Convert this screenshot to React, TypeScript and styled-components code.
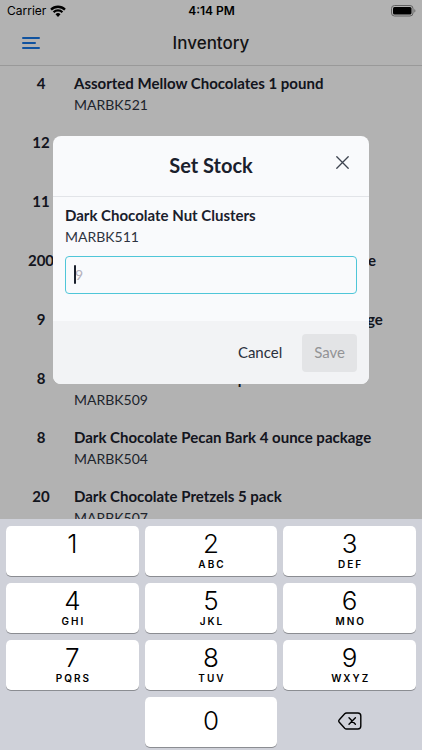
import React from "react";
import styled, { createGlobalStyle } from "styled-components";

const GlobalStyle = createGlobalStyle`
  *, *::before, *::after { box-sizing: border-box; }
  body { margin: 0; background: #fff; color: #1a202c; font-family: Lato, "Open Sans", sans-serif; }
  button, input { font: inherit; color: inherit; }
  button { border: 0; padding: 0; background: none; cursor: pointer; }
  h1, h2, h3, p, ul { margin: 0; padding: 0; }
`;

const Screen = styled.div`
  display: flex;
  flex-direction: column;
  height: 100vh;
  overflow: hidden;
`;

const Stage = styled.div`
  position: relative;
  flex: 1;
  min-height: 0;
  overflow: hidden;
`;

const StatusBar = styled.div`
  display: grid;
  grid-template-columns: 1fr auto 1fr;
  align-items: center;
  height: 22px;
  padding: 0 6px 0 7px;
  color: #000;
  font: 400 12px/22px Inter, sans-serif;
`;

const Carrier = styled.div`
  display: flex;
  align-items: center;
  gap: 4px;
`;

const Clock = styled.time`
  font-weight: 600;
`;

const Battery = styled.svg`
  justify-self: end;
`;

const NavBar = styled.header`
  display: grid;
  grid-template-columns: 1fr auto 1fr;
  align-items: center;
  height: 44px;
  padding: 0 20px 2px;
  border-bottom: 1px solid #dcdcdc;
`;

const MenuButton = styled.button`
  display: flex;
  justify-self: start;
`;

const NavTitle = styled.h1`
  color: #1c1c1e;
  font: 500 17px/20px Inter, sans-serif;
`;

const StockList = styled.ul`
  list-style: none;
`;

const StockRow = styled.li`
  display: grid;
  grid-template-columns: 66px 1fr;
  height: 59px;
  padding: 6px 8px 0;
  white-space: nowrap;
`;

const Count = styled.span`
  text-align: center;
  font-weight: 700;
  font-size: 15px;
  line-height: 22px;
`;

const ProductName = styled.h3`
  display: block;
  font-weight: 700;
  font-size: 15px;
  line-height: 22px;
`;

const Sku = styled.p`
  font-size: 14px;
  line-height: 22px;
  color: #2d3340;
`;

const Backdrop = styled.div`
  position: absolute;
  inset: 0;
  display: flex;
  align-items: center;
  justify-content: center;
  padding: 0 53px;
  background: rgba(0, 0, 0, 0.3);
`;

const Dialog = styled.form`
  flex: 1;
  max-width: 480px;
  border-radius: 8px;
  overflow: hidden;
  background: #f9fafc;
`;

const DialogHeader = styled.div`
  display: grid;
  grid-template-columns: 1fr auto 1fr;
  align-items: center;
  height: 61px;
  padding: 0 20px 2px;
  border-bottom: 1px solid #e2e4e8;
`;

const DialogTitle = styled.h2`
  grid-column: 2;
  font-size: 20px;
  line-height: 24px;
  font-weight: 700;
`;

const CloseButton = styled.button`
  display: flex;
  justify-self: end;
  padding-bottom: 4px;
`;

const DialogBody = styled.div`
  padding: 7px 12px 27px;
`;

const Field = styled.div`
  position: relative;
  margin-top: 8px;
`;

const StockInput = styled.input`
  display: block;
  width: 100%;
  height: 38px;
  padding: 0 9px;
  border: 1px solid #4fc6d8;
  border-radius: 4px;
  outline: 0;
  background: transparent;
  font-size: 14px;
  caret-color: transparent;
  &::placeholder { color: #b4b0bb; opacity: 1; }
`;

const Caret = styled.span`
  position: absolute;
  left: 9px;
  top: 9px;
  width: 2px;
  height: 19px;
  border-radius: 1px;
  background: #1a202c;
`;

const DialogFooter = styled.div`
  display: flex;
  justify-content: flex-end;
  gap: 8px;
  padding: 13px 12px 12px;
  background: #f2f3f5;
`;

const ActionButton = styled.button<{ $filled?: boolean }>`
  height: 38px;
  padding: 0 12px 2px;
  border-radius: 4px;
  font-size: 15px;
  background: ${(p) => (p.$filled ? "#e3e4e6" : "transparent")};
  color: ${(p) => (p.$filled ? "#929395" : "#2a303c")};
`;

const Keypad = styled.div`
  display: grid;
  grid-template-columns: repeat(3, 1fr);
  grid-auto-rows: 50px;
  gap: 7px 6px;
  padding: 7px 6px 3px;
  background: #cfd1d9;
  color: #000;
  font-family: Inter, sans-serif;
`;

const Key = styled.button<{ $plain?: boolean }>`
  display: flex;
  flex-direction: column;
  align-items: center;
  justify-content: center;
  padding-bottom: 3px;
  border-radius: 5px;
  background: ${(p) => (p.$plain ? "transparent" : "#fff")};
  box-shadow: ${(p) => (p.$plain ? "none" : "0 1px 0 #8b8d92")};
`;

const Digit = styled.span`
  font-size: 26px;
  line-height: 28px;
  font-weight: 300;
`;

const Letters = styled.span`
  height: 12px;
  padding-left: 2px;
  font-size: 10px;
  line-height: 12px;
  font-weight: 600;
  letter-spacing: 2px;
`;

const stock = [
  { count: 4, name: "Assorted Mellow Chocolates 1 pound", sku: "MARBK521" },
  { count: 12, name: "Chocolate Nut Clusters", sku: "MARBK512" },
  { count: 11, name: "Dark Chocolate Nut Clusters", sku: "MARBK511" },
  { count: 200, name: "Dark Chocolate Cherry Bark 4 ounce package", sku: "MARBK502" },
  { count: 9, name: "Dark Chocolate Almond Bark 4 ounce package", sku: "MARBK503" },
  { count: 8, name: "Dark Chocolate Oreos 5 pack", sku: "MARBK509" },
  { count: 8, name: "Dark Chocolate Pecan Bark 4 ounce package", sku: "MARBK504" },
  { count: 20, name: "Dark Chocolate Pretzels 5 pack", sku: "MARBK507" },
];

const keys = [
  ["1", ""], ["2", "ABC"], ["3", "DEF"],
  ["4", "GHI"], ["5", "JKL"], ["6", "MNO"],
  ["7", "PQRS"], ["8", "TUV"], ["9", "WXYZ"],
];

export default function App() {
  return (
    <>
      <GlobalStyle />
      <Screen>
        <Stage>
          <StatusBar>
            <Carrier>
              Carrier
              <svg width="16" height="12" viewBox="0 0 16 12" fill="none" stroke="#000" strokeWidth="2.3" aria-hidden="true">
                <path d="M1 4.6a10 10 0 0 1 14 0" />
                <path d="M3.6 7.3a6.2 6.2 0 0 1 8.8 0" />
                <path d="M5.5 9.3a3.6 3.6 0 0 1 5 0L8 11.9z" fill="#000" stroke="none" />
              </svg>
            </Carrier>
            <Clock>4:14 PM</Clock>
            <Battery width="26" height="12" viewBox="0 0 26 12" aria-label="Battery full">
              <rect x="1.5" y=".5" width="21.5" height="10.5" rx="3" fill="none" stroke="#8c8c8c" />
              <rect x="3" y="2" width="18.5" height="7.5" rx="1.5" fill="#000" />
              <path d="M24.4 4v3.6c1.3-.5 1.3-3.1 0-3.6z" fill="#8c8c8c" />
            </Battery>
          </StatusBar>
          <NavBar>
            <MenuButton type="button" aria-label="Menu">
              <svg width="22" height="14" viewBox="0 0 22 14" stroke="#1877e6" strokeWidth="2" strokeLinecap="round">
                <path d="M3 2h16M3 7h12M3 12h16" />
              </svg>
            </MenuButton>
            <NavTitle>Inventory</NavTitle>
          </NavBar>
          <StockList>
            {stock.map((item) => (
              <StockRow key={item.sku}>
                <Count>{item.count}</Count>
                <div>
                  <ProductName>{item.name}</ProductName>
                  <Sku>{item.sku}</Sku>
                </div>
              </StockRow>
            ))}
          </StockList>
          <Backdrop>
            <Dialog role="dialog" aria-labelledby="dialog-title" onSubmit={(e) => e.preventDefault()}>
              <DialogHeader>
                <DialogTitle id="dialog-title">Set Stock</DialogTitle>
                <CloseButton type="button" aria-label="Close">
                  <svg width="13" height="13" viewBox="0 0 13 13" stroke="#3e4450" strokeWidth="1.3" strokeLinecap="round">
                    <path d="M.8.8l11.4 11.4M12.2.8.8 12.2" />
                  </svg>
                </CloseButton>
              </DialogHeader>
              <DialogBody>
                <ProductName as="label" htmlFor="stock">Dark Chocolate Nut Clusters</ProductName>
                <Sku>MARBK511</Sku>
                <Field>
                  <StockInput id="stock" inputMode="numeric" placeholder="9" />
                  <Caret />
                </Field>
              </DialogBody>
              <DialogFooter>
                <ActionButton type="button">Cancel</ActionButton>
                <ActionButton type="submit" $filled disabled>Save</ActionButton>
              </DialogFooter>
            </Dialog>
          </Backdrop>
        </Stage>
        <Keypad>
          {keys.map(([digit, letters]) => (
            <Key key={digit} type="button">
              <Digit>{digit}</Digit>
              <Letters>{letters}</Letters>
            </Key>
          ))}
          <span />
          <Key type="button"><Digit>0</Digit></Key>
          <Key type="button" $plain aria-label="Delete">
            <svg width="24" height="18" viewBox="0 0 24 18" fill="none" stroke="#000" strokeWidth="1.4" strokeLinecap="round" strokeLinejoin="round">
              <path d="M8.6 1h11.2a3 3 0 0 1 3 3v10a3 3 0 0 1-3 3H8.6a2.6 2.6 0 0 1-1.9-.8L1.3 10.3a1.8 1.8 0 0 1 0-2.6L6.7 1.8A2.6 2.6 0 0 1 8.6 1z" />
              <path d="M11 5.8l6.4 6.4M17.4 5.8L11 12.2" />
            </svg>
          </Key>
        </Keypad>
      </Screen>
    </>
  );
}
